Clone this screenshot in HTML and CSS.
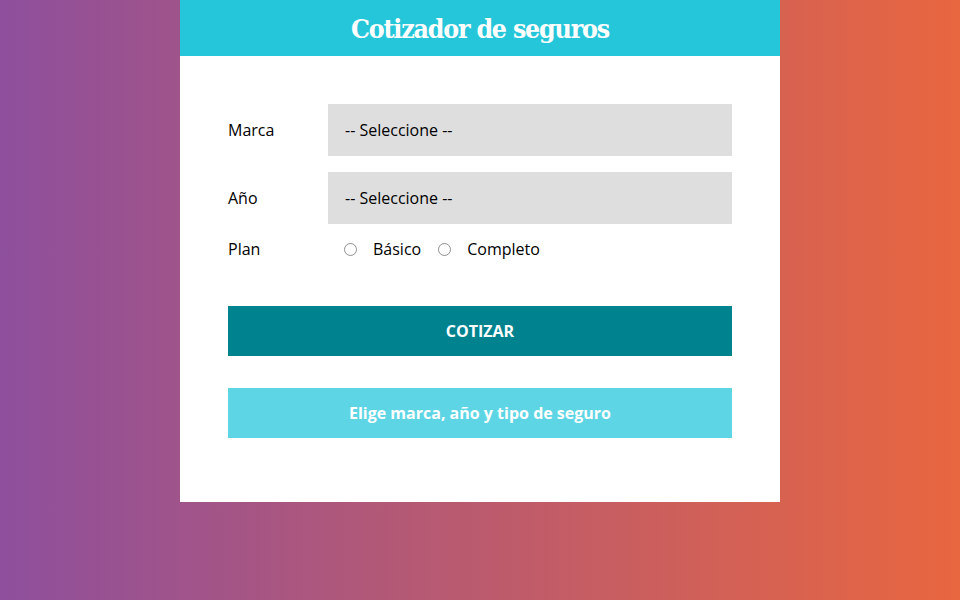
FILE: index.html
```html
<!DOCTYPE html>
<html lang="es">
<head>
<meta charset="utf-8">
<title>Cotizador de seguros</title>
<link rel="stylesheet" href="styles.css">
</head>
<body>
<div class="app">
  <header class="header">
    <h1 class="title">Cotizador de seguros</h1>
  </header>
  <form class="form">
    <div class="row">
      <label class="label">Marca</label>
      <select class="select"><option>-- Seleccione --</option></select>
    </div>
    <div class="row">
      <label class="label">Año</label>
      <select class="select"><option>-- Seleccione --</option></select>
    </div>
    <div class="row plan">
      <label class="label">Plan</label>
      <div class="radios">
        <span class="radio"></span><span class="opt">Básico</span>
        <span class="radio"></span><span class="opt">Completo</span>
      </div>
    </div>
    <button type="button" class="btn">COTIZAR</button>
    <div class="msg">Elige marca, año y tipo de seguro</div>
  </form>
</div>
</body>
</html>
```
FILE: styles.css
```css
html, body { margin: 0; height: 100%; }
body {
  background: linear-gradient(to right, #8e4f9c 0%, #e8663f 100%);
  font-family: "Open Sans", "Liberation Sans", sans-serif;
  font-size: 16px;
  color: #000;
}
.app { width: 600px; margin: 0 auto; }
.header {
  background: #26c6da;
  height: 56px;
  display: flex;
  align-items: center;
  justify-content: center;
}
.title {
  margin: 0;
  color: #fff;
  font-family: "DejaVu Serif Condensed", "DejaVu Serif", serif;
  font-weight: bold;
  font-size: 26.5px;
  letter-spacing: -1.2px;
}
.form {
  background: #fff;
  padding: 48px 48px 64px;
  display: flex;
  flex-direction: column;
}
.row { display: flex; align-items: center; margin-bottom: 16px; }
.label { width: 100px; flex: none; }
.select {
  flex: 1;
  height: 52px;
  border: none;
  background: #dedede;
  -webkit-appearance: none;
  appearance: none;
  font-family: inherit;
  font-size: 16px;
  padding: 0 17px;
  color: #000;
  border-radius: 0;
}
.plan { margin-top: -8px; margin-bottom: 0; height: 34px; }
.radios { display: flex; align-items: center; padding-left: 16px; }
.radio {
  width: 11px; height: 11px;
  border: 1px solid #767676;
  border-radius: 50%;
  margin-right: 16px;
  opacity: 0.8;
}
.opt { margin-right: 17px; }
.btn {
  margin-top: 40px;
  height: 50px;
  border: none;
  background: #00838f;
  color: #fff;
  font-family: inherit;
  font-weight: bold;
  font-size: 16px;
}
.msg {
  margin-top: 32px;
  height: 50px;
  background: #5dd5e5;
  color: #fff;
  font-weight: bold;
  display: flex;
  align-items: center;
  justify-content: center;
}
```
